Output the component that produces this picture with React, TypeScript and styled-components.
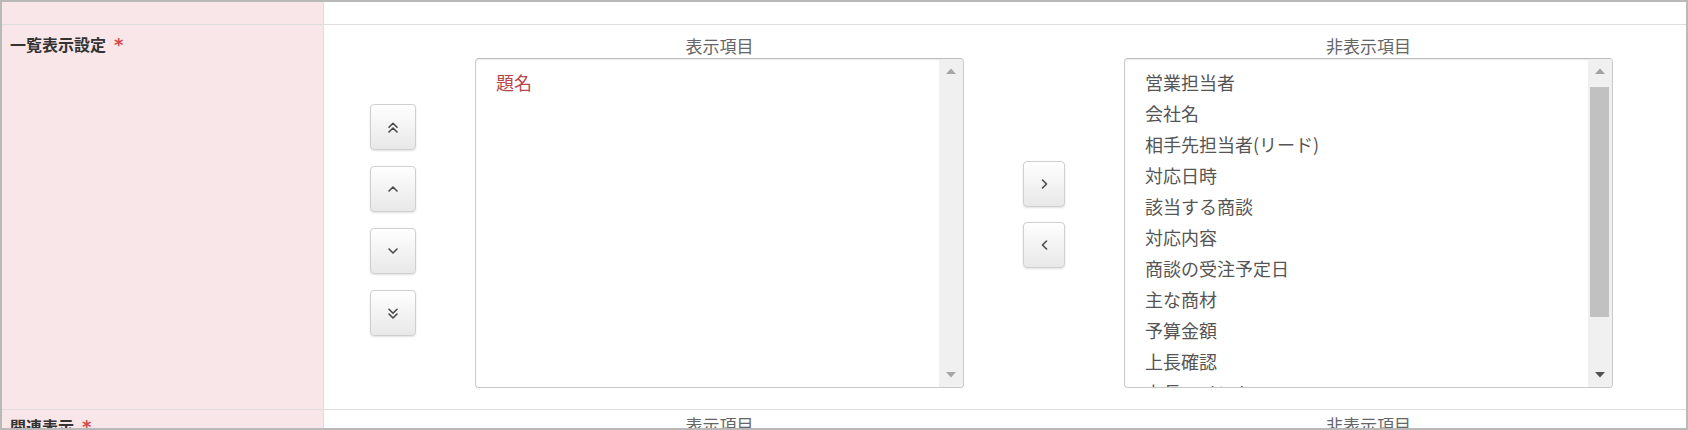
import React from "react";
import styled, { createGlobalStyle } from "styled-components";

const GlobalStyle = createGlobalStyle`
  html, body { margin: 0; padding: 0; background: #fff; }
  body { font-family: "Noto Sans CJK JP", "Noto Sans", sans-serif; }
  ul { margin: 0; padding: 0; list-style: none; }
`;

const Frame = styled.div`
  width: 1688px;
  height: 430px;
  box-sizing: border-box;
  border: 2px solid #b9b9b9;
  overflow: hidden;
  background: #fff;
`;

const Row = styled.div<{ $height?: number }>`
  display: grid;
  grid-template-columns: 322px 1fr;
  border-bottom: 1px solid #dedede;
  ${(p) => (p.$height ? `height: ${p.$height}px;` : "")}
`;

const LabelCell = styled.div<{ $tight?: boolean }>`
  box-sizing: border-box;
  background: #f9e6e8;
  border-right: 1px solid #dedede;
  padding: ${(p) => (p.$tight ? "5px" : "8px")} 0 0 8px;
  font-size: 16px;
  line-height: 22px;
  font-weight: bold;
  color: #333;
`;

const Required = styled.span`
  color: #d2494a;
  font-weight: bold;
  font-size: 18px;
  margin-left: 8px;
  font-family: "DejaVu Sans", sans-serif;
`;

const ContentCell = styled.div<{ $tight?: boolean }>`
  display: grid;
  grid-template-columns: 46px 489px 42px 489px;
  grid-template-rows: 24px 330px;
  column-gap: 59px;
  padding: ${(p) => (p.$tight ? "3px" : "9px")} 0 21px 46px;
`;

const Header = styled.div<{ $col: number }>`
  grid-column: ${(p) => p.$col};
  grid-row: 1;
  text-align: center;
  font-size: 17px;
  line-height: 24px;
  color: #666;
`;

const ButtonColumn = styled.div<{ $col: number; $shift: number; $gap: number }>`
  grid-column: ${(p) => p.$col};
  grid-row: 2;
  display: flex;
  flex-direction: column;
  justify-content: center;
  align-items: center;
  gap: ${(p) => p.$gap}px;
  padding-bottom: ${(p) => p.$shift}px;
`;

const MoveButton = styled.button<{ $w: number }>`
  width: ${(p) => p.$w}px;
  height: 46px;
  box-sizing: border-box;
  padding: 0;
  display: flex;
  align-items: center;
  justify-content: center;
  border: 1px solid #cfcfcf;
  border-radius: 4px;
  background: linear-gradient(#ffffff, #e8e8e8);
  box-shadow: 0 1px 2px rgba(0, 0, 0, 0.12);
  cursor: pointer;
`;

const ListBox = styled.div<{ $col: number }>`
  grid-column: ${(p) => p.$col};
  grid-row: 2;
  display: flex;
  box-sizing: border-box;
  border: 1px solid #c9c9c9;
  border-top-color: #bdbdbd;
  border-radius: 4px;
  box-shadow: inset 0 1px 1px rgba(0, 0, 0, 0.08);
  overflow: hidden;
  background: #fff;
`;

const Items = styled.ul`
  flex: 1;
  padding: 8px 0 0 20px !important;
  overflow: hidden;
`;

const Item = styled.li<{ $selected?: boolean }>`
  font-size: 18px;
  line-height: 31px;
  height: 31px;
  white-space: nowrap;
  color: ${(p) => (p.$selected ? "#b8464a" : "#555")};
`;

const ScrollBar = styled.div`
  width: 24px;
  flex: none;
  display: flex;
  flex-direction: column;
  background: #f0f0f0;
`;

const ArrowBox = styled.div`
  height: 24px;
  flex: none;
  display: flex;
  align-items: center;
  justify-content: center;
`;

const Track = styled.div`
  flex: 1;
  display: flex;
  flex-direction: column;
`;

const Thumb = styled.div`
  margin: 4px 3px 0 2px;
  height: 230px;
  background: #c1c1c1;
`;

const Chevron = ({ dir, double }: { dir: "up" | "down" | "left" | "right"; double?: boolean }) => {
  const one = {
    up: "1,5 5,1 9,5",
    down: "1,1 5,5 9,1",
    right: "1.5,1 5.5,5 1.5,9",
    left: "5.5,1 1.5,5 5.5,9",
  }[dir];
  const vertical = dir === "up" || dir === "down";
  const w = vertical ? 10 : 7;
  const h = vertical ? (double ? 11 : 6) : 10;
  return (
    <svg width={w} height={h} viewBox={`0 0 ${w} ${h}`} fill="none">
      <polyline points={one} stroke="#4a4a4a" strokeWidth="1.6" strokeLinecap="round" strokeLinejoin="round" transform={double ? "translate(0,0.3)" : undefined} />
      {double && (
        <polyline points={one} stroke="#4a4a4a" strokeWidth="1.6" strokeLinecap="round" strokeLinejoin="round" transform="translate(0,5)" />
      )}
    </svg>
  );
};

const Triangle = ({ up, color }: { up?: boolean; color: string }) => (
  <svg width="10" height="6" viewBox="0 0 10 6">
    <polygon points={up ? "0,6 5,0.5 10,6" : "0,0 10,0 5,5.5"} fill={color} />
  </svg>
);

const shown = ["題名"];
const hidden = [
  "営業担当者",
  "会社名",
  "相手先担当者(リード)",
  "対応日時",
  "該当する商談",
  "対応内容",
  "商談の受注予定日",
  "主な商材",
  "予算金額",
  "上長確認",
  "上長コメント",
];

const SelectorRow = ({
  label,
  tight,
  left,
  right,
}: {
  label: string;
  tight?: boolean;
  left: string[];
  right: string[];
}) => (
  <Row>
    <LabelCell $tight={tight}>
      {label}
      <Required>*</Required>
    </LabelCell>
    <ContentCell $tight={tight}>
      <Header $col={2}>表示項目</Header>
      <Header $col={4}>非表示項目</Header>
      <ButtonColumn $col={1} $shift={6} $gap={16}>
        <MoveButton $w={46}><Chevron dir="up" double /></MoveButton>
        <MoveButton $w={46}><Chevron dir="up" /></MoveButton>
        <MoveButton $w={46}><Chevron dir="down" /></MoveButton>
        <MoveButton $w={46}><Chevron dir="down" double /></MoveButton>
      </ButtonColumn>
      <ListBox $col={2}>
        <Items>
          {left.map((t) => (
            <Item key={t} $selected>{t}</Item>
          ))}
        </Items>
        <ScrollBar>
          <ArrowBox><Triangle up color="#a6a6a6" /></ArrowBox>
          <Track />
          <ArrowBox><Triangle color="#a6a6a6" /></ArrowBox>
        </ScrollBar>
      </ListBox>
      <ButtonColumn $col={3} $shift={18} $gap={15}>
        <MoveButton $w={42}><Chevron dir="right" /></MoveButton>
        <MoveButton $w={42}><Chevron dir="left" /></MoveButton>
      </ButtonColumn>
      <ListBox $col={4}>
        <Items>
          {right.map((t) => (
            <Item key={t}>{t}</Item>
          ))}
        </Items>
        <ScrollBar>
          <ArrowBox><Triangle up color="#a3a3a3" /></ArrowBox>
          <Track>
            <Thumb />
          </Track>
          <ArrowBox><Triangle color="#505050" /></ArrowBox>
        </ScrollBar>
      </ListBox>
    </ContentCell>
  </Row>
);

const EmptyRow = () => (
  <Row $height={22}>
    <LabelCell />
    <div />
  </Row>
);

export default function App() {
  return (
    <>
      <GlobalStyle />
      <Frame>
        <EmptyRow />
        <SelectorRow label="一覧表示設定" left={shown} right={hidden} />
        <SelectorRow label="関連表示" tight left={[]} right={[]} />
      </Frame>
    </>
  );
}
